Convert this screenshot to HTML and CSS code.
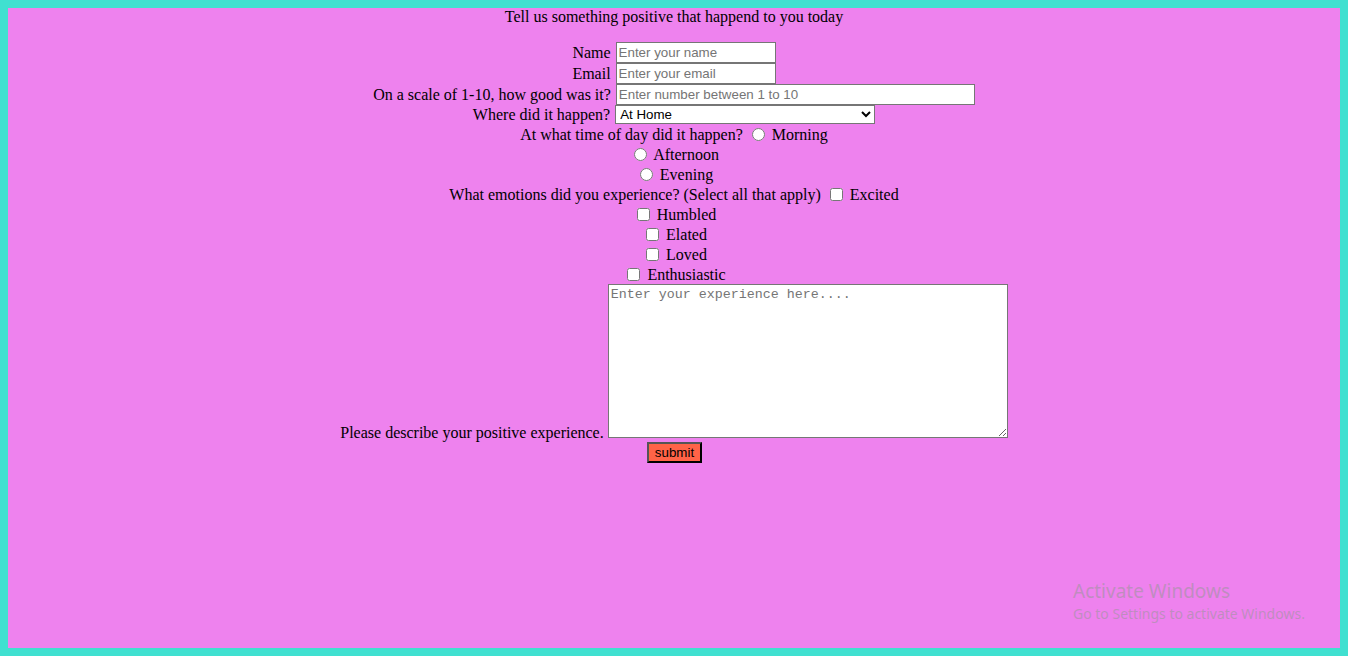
FILE: index.html
```html
<!DOCTYPE html>
<html lang="en">
<head>
<meta charset="utf-8">
<title>Positive experience</title>
<link rel="stylesheet" href="styles.css">
</head>
<body>
<form class="survey">
  <div class="title">Tell us something positive that happend to you today</div>
  <div class="field"><label for="name">Name</label> <input class="text short" id="name" type="text" placeholder="Enter your name"></div>
  <div class="field"><label for="email">Email</label> <input class="text short" id="email" type="email" placeholder="Enter your email"></div>
  <div class="field"><label for="scale">On a scale of 1-10, how good was it?</label> <input class="text long" id="scale" type="text" placeholder="Enter number between 1 to 10"></div>
  <div class="field sel"><label for="where">Where did it happen?</label> <select id="where" class="select"><option>At Home</option><option>At Work</option><option>At School</option><option>Outside</option></select></div>
  <div class="line">At what time of day did it happen? <input type="radio" name="time" id="t1"> <label for="t1">Morning</label></div>
  <div class="line"><input type="radio" name="time" id="t2"> <label for="t2">Afternoon</label></div>
  <div class="line"><input type="radio" name="time" id="t3"> <label for="t3">Evening</label></div>
  <div class="line">What emotions did you experience? (Select all that apply) <input type="checkbox" id="e1"> <label for="e1">Excited</label></div>
  <div class="line"><input type="checkbox" id="e2"> <label for="e2">Humbled</label></div>
  <div class="line"><input type="checkbox" id="e3"> <label for="e3">Elated</label></div>
  <div class="line"><input type="checkbox" id="e4"> <label for="e4">Loved</label></div>
  <div class="line"><input type="checkbox" id="e5"> <label for="e5">Enthusiastic</label></div>
  <div class="area-row"><label for="exp" class="area-label">Please describe your positive experience.</label><textarea id="exp" class="area" placeholder="Enter your experience here...."></textarea></div>
  <div class="submit-row"><button type="submit" class="submit">submit</button></div>
</form>
<div class="watermark">
  <div class="wm-title">Activate Windows</div>
  <div class="wm-sub">Go to Settings to activate Windows.</div>
</div>
</body>
</html>
```
FILE: styles.css
```css
html {
  background: #40e0d0;
  margin: 0;
  padding: 0;
}
body {
  margin: 8px;
  height: 640px;
  background: #ee82ee;
  font-family: "Liberation Serif", "Times New Roman", serif;
  font-size: 16px;
  color: #000;
  overflow: hidden;
}
.survey {
  margin: 0;
  text-align: center;
}
.title {
  height: 19px;
  line-height: 18px;
  margin-bottom: 15px;
}
.field {
  height: 21px;
  display: flex;
  justify-content: center;
  align-items: center;
  gap: 5px;
}
.field.sel {
  height: 19px;
}
.text {
  font-family: "Liberation Sans", Arial, sans-serif;
  font-size: 13.33px;
  height: 21px;
  box-sizing: border-box;
  padding: 1px 2px;
  border: 1px solid #767676;
  margin: 0;
  background: #fff;
}
.text::placeholder {
  color: #757575;
}
.short { width: 160px; }
.long { width: 359px; }
.select {
  font-family: "Liberation Sans", Arial, sans-serif;
  font-size: 13.33px;
  width: 260px;
  height: 19px;
  box-sizing: border-box;
  margin: 0;
  border: 1px solid #767676;
  background: #fff;
}
.line {
  height: 19px;
  padding-top: 1px;
  line-height: 20px;
}
.line input {
  margin: 3px 3px 0 5px;
  vertical-align: -1px;
  width: 13px;
  height: 13px;
}
.area-row {
  height: 158px;
  display: flex;
  justify-content: center;
  align-items: flex-end;
  gap: 4px;
}
.area-label {
  line-height: 18px;
}
.area {
  width: 400px;
  height: 154px;
  box-sizing: border-box;
  margin: 0 0 4px 0;
  padding: 2px;
  border: 1px solid #767676;
  font-family: "Liberation Mono", "Courier New", monospace;
  font-size: 13.33px;
  background: #fff;
}
.area::placeholder {
  color: #757575;
}
.submit-row {
  height: 21px;
  display: flex;
  justify-content: center;
}
.submit {
  font-family: "Liberation Sans", Arial, sans-serif;
  font-size: 13.33px;
  height: 21px;
  width: 55px;
  box-sizing: border-box;
  padding: 0;
  margin-left: 1px;
  background: #ff6347;
  color: #000;
  border: 2px outset #333;
  border-color: #555 #222 #222 #555;
}
.watermark {
  position: absolute;
  left: 1073px;
  top: 578px;
  font-family: "Noto Sans", "Open Sans", sans-serif;
  color: rgba(150, 150, 150, 0.55);
  pointer-events: none;
}
.wm-title {
  font-size: 19px;
  line-height: 26px;
}
.wm-sub {
  font-size: 14px;
  line-height: 20px;
}
```
